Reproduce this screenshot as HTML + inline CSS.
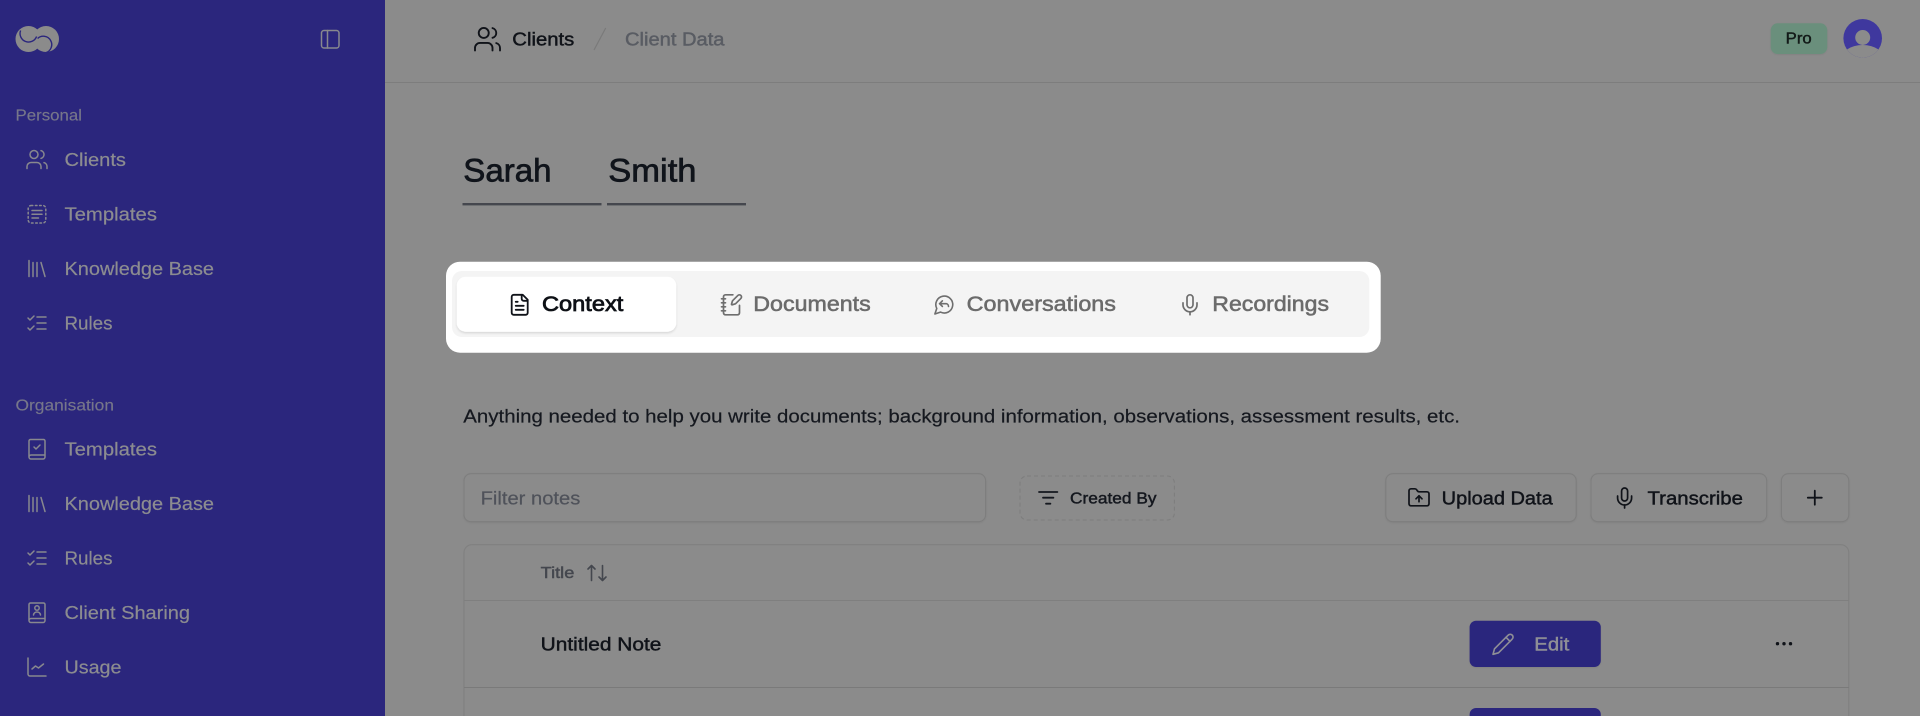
<!DOCTYPE html>
<html lang="en"><head><meta charset="utf-8"><title>Client Data</title>
<style>
html,body{margin:0;padding:0;width:1920px;height:716px;overflow:hidden;background:#8b8b8b}
svg{display:block}
text{font-family:"Liberation Sans",Arial,sans-serif;white-space:pre}
.nav{font-size:18.8px;fill:#8c8c90;stroke:#8c8c90;stroke-width:.2px}
.lab{font-size:15.6px;fill:#76768a;stroke:#76768a;stroke-width:.15px}
.ic{fill:none;stroke-linecap:round;stroke-linejoin:round}
.si{stroke:#88888e;stroke-width:1.5}
.d{stroke:#101319;stroke-width:1.8}
.g{stroke:#6e6e6e;stroke-width:1.7}
.m{stroke-width:.45px}
.r{stroke-width:.2px}
</style></head><body>
<svg width="1920" height="716" viewBox="0 0 1920 716" xmlns="http://www.w3.org/2000/svg">
<defs>
<filter id="sh" x="-10%" y="-20%" width="120%" height="150%"><feDropShadow dx="0" dy="1.5" stdDeviation="1" flood-color="#000" flood-opacity=".12"/></filter>
<filter id="sh2" x="-10%" y="-20%" width="120%" height="150%"><feDropShadow dx="0" dy=".8" stdDeviation=".8" flood-color="#000" flood-opacity=".07"/></filter>
<clipPath id="av"><circle cx="1862.7" cy="38.3" r="19.3"/></clipPath>
</defs>
<rect width="1920" height="716" fill="#8b8b8b"/>

<!-- sidebar -->
<rect width="385" height="716" fill="#2b267d"/>
<g>
<circle cx="28.5" cy="39" r="13" fill="#8b8b8b"/>
<circle cx="46" cy="39" r="13" fill="#8b8b8b"/>
<path d="M20.6 30.5A8.4 8.4 0 0 0 36.6 36.5" fill="none" stroke="#2b267d" stroke-width="1.4"/>
<path d="M37.6 38.5A8.4 8.4 0 1 1 46 52.6" fill="none" stroke="#2b267d" stroke-width="1.4"/>
</g>
<g class="ic si"><rect x="321.5" y="30.5" width="17.5" height="17.5" rx="2.5"/><path d="M327.5 30.5v17.5"/></g>

<text class="lab" x="15.5" y="120.7" textLength="66.5" lengthAdjust="spacingAndGlyphs">Personal</text>
<text class="nav" x="64.5" y="165.8" textLength="61.5" lengthAdjust="spacingAndGlyphs">Clients</text>
<text class="nav" x="64.5" y="220.4" textLength="92.5" lengthAdjust="spacingAndGlyphs">Templates</text>
<text class="nav" x="64.5" y="275.1" textLength="149.5" lengthAdjust="spacingAndGlyphs">Knowledge Base</text>
<text class="nav" x="64.5" y="329.6" textLength="48" lengthAdjust="spacingAndGlyphs">Rules</text>
<text class="lab" x="15.5" y="410.4" textLength="98.5" lengthAdjust="spacingAndGlyphs">Organisation</text>
<text class="nav" x="64.5" y="455.5" textLength="92.5" lengthAdjust="spacingAndGlyphs">Templates</text>
<text class="nav" x="64.5" y="510" textLength="149.5" lengthAdjust="spacingAndGlyphs">Knowledge Base</text>
<text class="nav" x="64.5" y="564.5" textLength="48" lengthAdjust="spacingAndGlyphs">Rules</text>
<text class="nav" x="64.5" y="619" textLength="125.5" lengthAdjust="spacingAndGlyphs">Client Sharing</text>
<text class="nav" x="64.5" y="673.5" textLength="57" lengthAdjust="spacingAndGlyphs">Usage</text>

<g class="ic si">
<g transform="translate(25,147.5)"><path d="M16 21v-2a4 4 0 0 0-4-4H6a4 4 0 0 0-4 4v2"/><circle cx="9" cy="7" r="4"/><path d="M22 21v-2a4 4 0 0 0-3-3.87"/><path d="M16 3.13a4 4 0 0 1 0 7.75"/></g>
<rect x="28.2" y="205.5" width="17.6" height="17.5" rx="3" stroke-dasharray="1.6 2.6"/>
<path d="M32 210.5h10M32 214.2h10M32 218h6.5"/>
<g transform="translate(25,256.5)"><path d="m16 6 4 14M12 6v14M8 6v14M4 4v16"/></g>
<g transform="translate(25,311)"><path d="m3 17 2 2 4-4M3 7l2 2 4-4M12 6h9M12 12h9M12 18h9"/></g>
<g transform="translate(25,437)"><path d="M4 20V4a1.5 1.5 0 0 1 1.5-1.5h13A1.5 1.5 0 0 1 20 4v16a2 2 0 0 1-2 2H6a2 2 0 0 1-2-2a2 2 0 0 1 2-2h14"/><path d="m9 10 2 2 4-4"/></g>
<g transform="translate(25,491.5)"><path d="m16 6 4 14M12 6v14M8 6v14M4 4v16"/></g>
<g transform="translate(25,546)"><path d="m3 17 2 2 4-4M3 7l2 2 4-4M12 6h9M12 12h9M12 18h9"/></g>
<g transform="translate(25,600.5)"><path d="M4 20V4a1.5 1.5 0 0 1 1.5-1.5h13A1.5 1.5 0 0 1 20 4v16a2 2 0 0 1-2 2H6a2 2 0 0 1-2-2a2 2 0 0 1 2-2h14"/><circle cx="12" cy="7.5" r="2.2"/><path d="M8.5 14.5c.5-4 6.5-4 7 0"/></g>
<g transform="translate(25,655)"><path d="M3 3v16a2 2 0 0 0 2 2h16"/><path d="m7 14 3.5-3 3 2 5-4"/></g>
</g>

<!-- header -->
<rect x="385" y="82" width="1535" height="1" fill="#7d7d7d"/>
<g class="ic d" transform="translate(472.5,24.2) scale(1.25)" style="stroke-width:1.5"><path d="M16 21v-2a4 4 0 0 0-4-4H6a4 4 0 0 0-4 4v2"/><circle cx="9" cy="7" r="4"/><path d="M22 21v-2a4 4 0 0 0-3-3.87"/><path d="M16 3.13a4 4 0 0 1 0 7.75"/></g>
<text class="m" x="512.3" y="45.3" font-size="18.8" fill="#101319" stroke="#101319" textLength="62" lengthAdjust="spacingAndGlyphs">Clients</text>
<path d="M605.7 28 594 50" stroke="#7a7a7a" stroke-width="1.2" fill="none"/>
<text class="m" x="625" y="45.3" font-size="18.8" fill="#595c63" stroke="#595c63" textLength="99.5" lengthAdjust="spacingAndGlyphs">Client Data</text>
<rect x="1770.7" y="23.3" width="56.6" height="30.7" rx="7" fill="#6a8f7b" filter="url(#sh2)"/>
<text class="m" x="1785.7" y="43.7" font-size="16" fill="#131a18" stroke="#131a18" textLength="26" lengthAdjust="spacingAndGlyphs">Pro</text>
<circle cx="1862.7" cy="38.3" r="19.3" fill="#3f389e"/>
<g clip-path="url(#av)"><circle cx="1862.7" cy="37.5" r="7.5" fill="#8b8b8b"/><ellipse cx="1862.7" cy="60" rx="22" ry="15" fill="#8b8b8b"/></g>

<!-- name -->
<text class="m" x="463.3" y="181.7" font-size="32" fill="#10141b" stroke="#10141b" style="stroke-width:.7px" textLength="88.2" lengthAdjust="spacingAndGlyphs">Sarah</text>
<text class="m" x="608.3" y="181.7" font-size="32" fill="#10141b" stroke="#10141b" style="stroke-width:.7px" textLength="88.2" lengthAdjust="spacingAndGlyphs">Smith</text>
<rect x="462.5" y="203" width="139" height="2.4" fill="#45474e"/>
<rect x="607" y="203" width="139" height="2.4" fill="#45474e"/>

<!-- tabs -->
<rect x="446" y="261.7" width="934.7" height="91" rx="14" fill="#fff"/>
<rect x="452" y="271" width="917.3" height="66" rx="10" fill="#f4f4f4"/>
<rect x="456.7" y="276.7" width="219.6" height="55" rx="9" fill="#fff" filter="url(#sh)"/>
<g class="ic d" transform="translate(507.7,292.8) scale(1)"><path d="M15 2H6a2 2 0 0 0-2 2v16a2 2 0 0 0 2 2h12a2 2 0 0 0 2-2V7Z"/><path d="M14 2v4a2 2 0 0 0 2 2h4"/><path d="M10 9H8M16 13H8M16 17H8"/></g>
<text x="542" y="311" font-size="21.5" fill="#0e1116" stroke="#0e1116" style="stroke-width:.75px" textLength="81.3" lengthAdjust="spacingAndGlyphs">Context</text>
<g class="ic g" transform="translate(719.5,292.8)"><path d="M13.4 2H6a2 2 0 0 0-2 2v16a2 2 0 0 0 2 2h12a2 2 0 0 0 2-2v-7.4"/><path d="M2 6h4M2 10h4M2 14h4M2 18h4"/><path d="M21.378 5.626a1 1 0 1 0-3.004-3.004l-5.01 5.012a2 2 0 0 0-.506.854l-.837 2.87a.5.5 0 0 0 .62.62l2.87-.837a2 2 0 0 0 .854-.506z"/></g>
<text class="m" x="753.3" y="311" font-size="21.5" fill="#6b6b6b" stroke="#6b6b6b" style="stroke-width:.55px" textLength="117.4" lengthAdjust="spacingAndGlyphs">Documents</text>
<g class="ic g" transform="translate(933,293.3) scale(.94)"><path d="M7.9 20A9 9 0 1 0 4 16.1L2 22Z"/><path d="m10 8-3 3 3 3"/><path d="M7 11h7a3 3 0 0 1 2.5 3"/></g>
<text class="m" x="966.7" y="311" font-size="21.5" fill="#6b6b6b" stroke="#6b6b6b" style="stroke-width:.55px" textLength="149.3" lengthAdjust="spacingAndGlyphs">Conversations</text>
<g class="ic g" transform="translate(1178,292.8)"><path d="M12 2a3 3 0 0 0-3 3v7a3 3 0 0 0 6 0V5a3 3 0 0 0-3-3Z"/><path d="M19 10v2a7 7 0 0 1-14 0v-2"/><path d="M12 19v3"/></g>
<text class="m" x="1212.3" y="311" font-size="21.5" fill="#6b6b6b" stroke="#6b6b6b" style="stroke-width:.55px" textLength="116.7" lengthAdjust="spacingAndGlyphs">Recordings</text>

<!-- description -->
<text class="r" x="463.3" y="422.7" font-size="18.8" fill="#15181f" stroke="#15181f" textLength="996.7" lengthAdjust="spacingAndGlyphs">Anything needed to help you write documents; background information, observations, assessment results, etc.</text>

<!-- toolbar -->
<g fill="#8b8b8b" stroke="#7e7e7e" stroke-width="1.1">
<rect x="464" y="473.7" width="521.6" height="48" rx="7" filter="url(#sh2)"/>
<rect x="1020" y="476" width="154.4" height="44" rx="7" stroke-dasharray="4 3"/>
<rect x="1385.8" y="473.7" width="190.4" height="48" rx="7" filter="url(#sh2)"/>
<rect x="1591" y="473.7" width="175.7" height="48" rx="7" filter="url(#sh2)"/>
<rect x="1781.4" y="473.7" width="67.4" height="48" rx="7" filter="url(#sh2)"/>
</g>
<text class="r" x="480.6" y="504.3" font-size="18.8" fill="#4f525a" stroke="#4f525a" textLength="99.7" lengthAdjust="spacingAndGlyphs">Filter notes</text>
<path d="M1039 492h18.4M1043 497.7h10.4M1046 503.7h4.4" stroke="#15181f" stroke-width="1.8" fill="none" stroke-linecap="round"/>
<text class="m" x="1070" y="503.3" font-size="16" fill="#15181f" stroke="#15181f" textLength="86.5" lengthAdjust="spacingAndGlyphs">Created By</text>
<g class="ic d" transform="translate(1407,485.8)" style="stroke-width:1.7"><path d="M20 20a2 2 0 0 0 2-2V8a2 2 0 0 0-2-2h-7.9a2 2 0 0 1-1.69-.9L9.6 3.9A2 2 0 0 0 7.93 3H4a2 2 0 0 0-2 2v13a2 2 0 0 0 2 2Z"/><path d="M12 10v6"/><path d="m9 13 3-3 3 3"/></g>
<text class="m" x="1441.7" y="504.7" font-size="18.8" fill="#101319" stroke="#101319" textLength="111" lengthAdjust="spacingAndGlyphs">Upload Data</text>
<g class="ic d" transform="translate(1612.6,486)" style="stroke-width:1.7"><path d="M12 2a3 3 0 0 0-3 3v7a3 3 0 0 0 6 0V5a3 3 0 0 0-3-3Z"/><path d="M19 10v2a7 7 0 0 1-14 0v-2"/><path d="M12 19v3"/></g>
<text class="m" x="1647.5" y="504.7" font-size="18.8" fill="#101319" stroke="#101319" textLength="95.4" lengthAdjust="spacingAndGlyphs">Transcribe</text>
<path d="M1814.8 490.7v14M1807.8 497.7h14" stroke="#101319" stroke-width="1.8" stroke-linecap="round" fill="none"/>

<!-- table -->
<path d="M464 716V552.7a8 8 0 0 1 8-8H1840.8a8 8 0 0 1 8 8V716" fill="none" stroke="#808080" stroke-width="1.1"/>
<rect x="464" y="600" width="1385" height="1" fill="#7f7f7f"/>
<rect x="464" y="687" width="1385" height="1" fill="#7a7a7a"/>
<text class="m" x="540.7" y="578.2" font-size="16" fill="#44474e" stroke="#44474e" textLength="33.6" lengthAdjust="spacingAndGlyphs">Title</text>
<path d="M591.5 580.5V565.5M588 569l3.5-3.5 3.500 3.500M602.500 565.500V580.500M599 577l3.500 3.500 3.500-3.500" fill="none" stroke="#44474e" stroke-width="1.6" stroke-linecap="round" stroke-linejoin="round"/>
<text class="m" x="540.7" y="650.7" font-size="18.8" fill="#101319" stroke="#101319" textLength="120.700" lengthAdjust="spacingAndGlyphs">Untitled Note</text>
<rect x="1469.600" y="620.700" width="131.200" height="46.300" rx="6.500" fill="#2b267d" filter="url(#sh2)"/>
<g class="ic" stroke="#8f8f96" stroke-width="1.6" transform="translate(1491,632.300)"><path d="M17 3a2.850 2.830 0 1 1 4 4L7.500 20.500 2 22l1.500-5.500Z"/><path d="m15 5 4 4"/></g>
<text class="m" x="1534.300" y="650.700" font-size="18.800" fill="#8f8f96" stroke="#8f8f96" textLength="35" lengthAdjust="spacingAndGlyphs">Edit</text>
<circle cx="1777.500" cy="643.700" r="1.700" fill="#101319"/><circle cx="1784" cy="643.700" r="1.700" fill="#101319"/><circle cx="1790.500" cy="643.700" r="1.700" fill="#101319"/>
<rect x="1469.600" y="708" width="131.200" height="40" rx="6.500" fill="#2b267d"/>
</svg>
</body></html>
